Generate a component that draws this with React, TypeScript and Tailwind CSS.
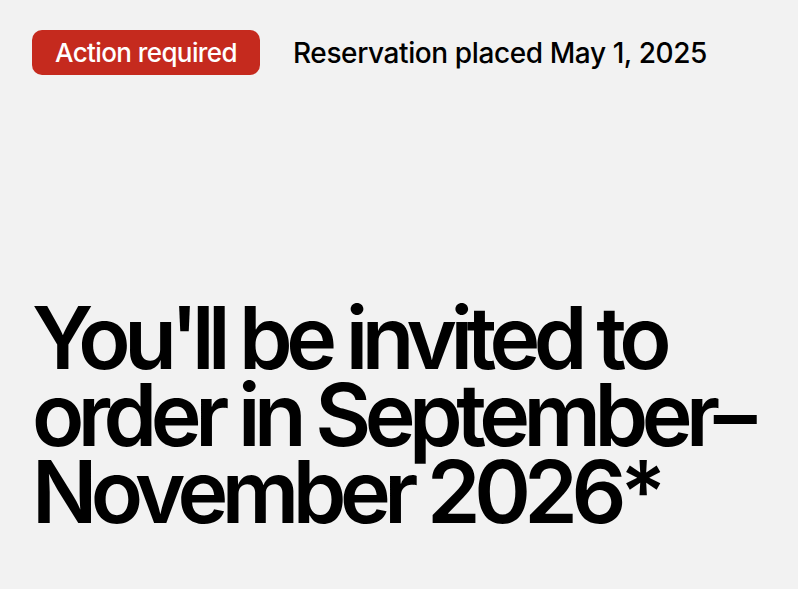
export default function App() {
  return (
    <div className="min-h-[589px] w-full bg-[#f2f2f2] pl-8 pt-[30px] font-['Inter',sans-serif] text-black">
      <div className="flex items-center gap-[33px]">
        <span className="inline-flex h-[45px] w-[228px] items-center justify-center rounded-[10px] bg-[#c52a1e] text-[26px] font-medium tracking-[-0.6px] text-white">
          Action required
        </span>
        <span className="text-[28px] font-medium tracking-[-0.4px]">Reservation placed May 1, 2025</span>
      </div>
      <h1 className="mt-[225px] text-[86px] font-semibold leading-[77px] tracking-[-6.5px]">
        You'll be invited to
        <br />
        order in September–
        <br />
        November 2026*
      </h1>
    </div>
  );
}
